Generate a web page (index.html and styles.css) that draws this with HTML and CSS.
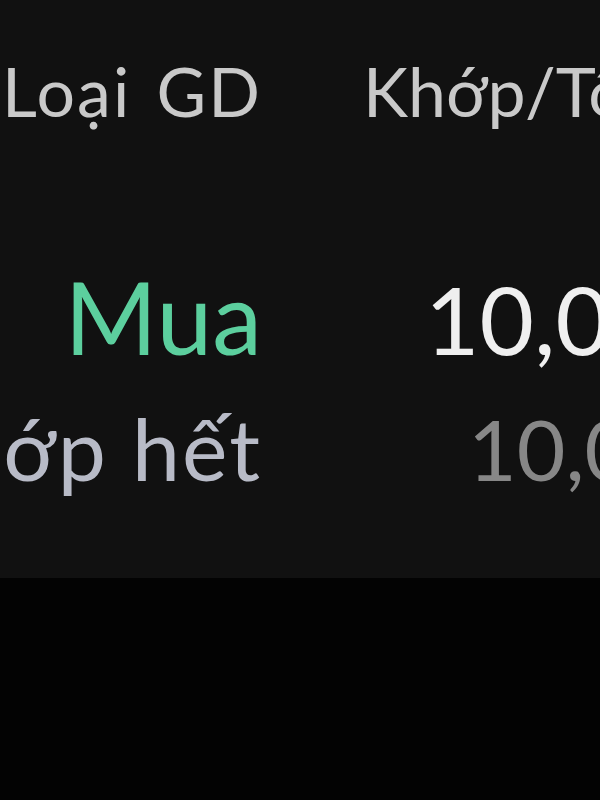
FILE: index.html
```html
<!DOCTYPE html>
<html lang="vi">
<head>
<meta charset="utf-8">
<link rel="stylesheet" href="styles.css">
</head>
<body>
<div class="panel">
  <div class="row head">
    <div class="cell left">Loại GD</div>
    <div class="cell right">Khớp/Tổng</div>
  </div>
  <div class="row main">
    <div class="cell left buy">Mua</div>
    <div class="cell right qty">10,000</div>
  </div>
  <div class="row sub">
    <div class="cell left status">Khớp hết</div>
    <div class="cell right qty2">10,000</div>
  </div>
</div>
</body>
</html>
```
FILE: styles.css
```css
html, body {
  margin: 0;
  padding: 0;
  background: #030303;
  overflow: hidden;
  width: 600px;
  height: 800px;
}
.panel {
  height: 578px;
  background: #111111;
  font-family: Lato, "Noto Sans", sans-serif;
  overflow: hidden;
}
.row {
  display: grid;
  grid-template-columns: 262px 1fr;
  align-items: baseline;
  white-space: nowrap;
}
.left {
  text-align: right;
  direction: rtl;
}
.head {
  font-size: 68px;
  line-height: 80px;
  color: #c9c9c9;
  padding-top: 51px;
}
.head .left {
  letter-spacing: 2px;
  word-spacing: 6px;
}
.head .right { padding-left: 101px; }
.main {
  margin-top: 130px;
  line-height: 110px;
}
.buy {
  font-size: 100px;
  color: #5ccf9e;
}
.qty {
  font-size: 94px;
  color: #efefef;
  padding-left: 163px;
}
.sub {
  margin-top: 24px;
  line-height: 100px;
}
.status {
  font-size: 86px;
  color: #b8bbc7;
  letter-spacing: 2px;
}
.qty2 {
  font-size: 84px;
  color: #878787;
  padding-left: 206px;
}
```
